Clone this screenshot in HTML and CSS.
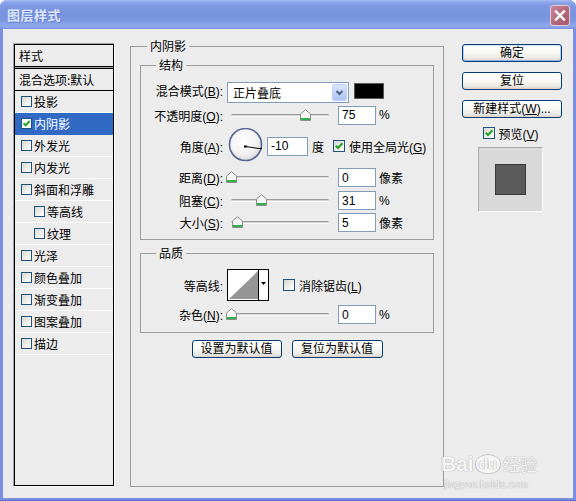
FILE: index.html
```html
<!DOCTYPE html>
<html lang="zh-CN">
<head>
<meta charset="utf-8">
<title>图层样式</title>
<link rel="stylesheet" href="styles.css">
</head>
<body>
<div class="window">
  <div class="titlebar">
    <span class="title">图层样式</span>
    <span class="close"><svg width="18" height="19" viewBox="0 0 18 19"><path d="M5 5.5 L13 13.5 M13 5.5 L5 13.5" stroke="#fff" stroke-width="2.4" stroke-linecap="square"/></svg></span>
  </div>
  <div class="client">
    <div class="stylelist">
      <div class="sl-inner">
        <div class="sl-head">样式</div>
        <div class="sl-sep"></div>
        <div class="sl-blend">混合选项:默认</div>
        <div class="sl-row"><span class="cb"></span>投影</div>
        <div class="sl-row sel"><span class="cb"><svg width="9" height="9" viewBox="0 0 9 9"><path d="M1.5 4.2 L3.6 6.4 L7.6 2" stroke="#21A121" stroke-width="1.9" fill="none"/></svg></span>内阴影</div>
        <div class="sl-row"><span class="cb"></span>外发光</div>
        <div class="sl-row"><span class="cb"></span>内发光</div>
        <div class="sl-row"><span class="cb"></span>斜面和浮雕</div>
        <div class="sl-row sub"><span class="cb"></span>等高线</div>
        <div class="sl-row sub"><span class="cb"></span>纹理</div>
        <div class="sl-row"><span class="cb"></span>光泽</div>
        <div class="sl-row"><span class="cb"></span>颜色叠加</div>
        <div class="sl-row"><span class="cb"></span>渐变叠加</div>
        <div class="sl-row"><span class="cb"></span>图案叠加</div>
        <div class="sl-row"><span class="cb"></span>描边</div>
      </div>
    </div>

    <fieldset class="grp main">
      <legend>内阴影</legend>
      <div class="main-body">
        <fieldset class="grp inner struct">
          <legend>结构</legend>
          <div class="row r1">
            <span class="lbl">混合模式(<u>B</u>):</span>
            <div class="select">
              <span class="sel-text">正片叠底</span>
              <span class="sel-btn"><svg width="13" height="15" viewBox="0 0 13 15"><path d="M3.5 6 L6.5 9 L9.5 6" stroke="#4D6185" stroke-width="2" fill="none"/></svg></span>
            </div>
            <span class="swatch"></span>
          </div>
          <div class="row r2">
            <span class="lbl">不透明度(<u>O</u>):</span>
            <div class="slider"><span class="track"></span><span class="thumb" style="left:75%"><svg width="11" height="12" viewBox="0 0 11 12"><path d="M0.5 11.5V5L5.5 0.7L10.5 5V11.5Z" fill="#f6f6f6" stroke="#8c8c8c"/><rect x="1" y="9" width="9" height="2" fill="#2eb04a"/></svg></span></div>
            <input class="num" value="75">
            <span class="unit">%</span>
          </div>
          <div class="row r3">
            <span class="lbl">角度(<u>A</u>):</span>
            <svg class="dial" width="36" height="34" viewBox="0 0 36 34">
              <defs><radialGradient id="dg" cx="42%" cy="38%" r="70%"><stop offset="0" stop-color="#ffffff"/><stop offset="0.6" stop-color="#f2f2f2"/><stop offset="1" stop-color="#d4d4d4"/></radialGradient></defs>
              <circle cx="17.5" cy="16.5" r="16" fill="url(#dg)" stroke="#56658f" stroke-width="1.6"/>
              <path d="M17.5 18.5 L31 20.5 L34 20.5" stroke="#000" stroke-width="1" fill="none"/>
              <rect x="16" y="17.5" width="3" height="2" fill="#000"/>
            </svg>
            <input class="num ang" value="-10">
            <span class="unit deg">度</span>
            <span class="cb lg"><svg width="10" height="10" viewBox="0 0 10 10"><path d="M1.8 4.8 L4 7 L8.4 2.2" stroke="#21A121" stroke-width="2" fill="none"/></svg></span>
            <span class="cbtext">使用全局光(<u>G</u>)</span>
          </div>
          <div class="row r4">
            <span class="lbl">距离(<u>D</u>):</span>
            <div class="slider"><span class="track"></span><span class="thumb" style="left:0%"><svg width="11" height="12" viewBox="0 0 11 12"><path d="M0.5 11.5V5L5.5 0.7L10.5 5V11.5Z" fill="#f6f6f6" stroke="#8c8c8c"/><rect x="1" y="9" width="9" height="2" fill="#2eb04a"/></svg></span></div>
            <input class="num" value="0">
            <span class="unit">像素</span>
          </div>
          <div class="row r5">
            <span class="lbl">阻塞(<u>C</u>):</span>
            <div class="slider"><span class="track"></span><span class="thumb" style="left:31%"><svg width="11" height="12" viewBox="0 0 11 12"><path d="M0.5 11.5V5L5.5 0.7L10.5 5V11.5Z" fill="#f6f6f6" stroke="#8c8c8c"/><rect x="1" y="9" width="9" height="2" fill="#2eb04a"/></svg></span></div>
            <input class="num" value="31">
            <span class="unit">%</span>
          </div>
          <div class="row r6">
            <span class="lbl">大小(<u>S</u>):</span>
            <div class="slider"><span class="track"></span><span class="thumb" style="left:6%"><svg width="11" height="12" viewBox="0 0 11 12"><path d="M0.5 11.5V5L5.5 0.7L10.5 5V11.5Z" fill="#f6f6f6" stroke="#8c8c8c"/><rect x="1" y="9" width="9" height="2" fill="#2eb04a"/></svg></span></div>
            <input class="num" value="5">
            <span class="unit">像素</span>
          </div>
        </fieldset>

        <fieldset class="grp inner quality">
          <legend>品质</legend>
          <div class="row q1">
            <span class="lbl">等高线:</span>
            <svg class="contour" width="42" height="32" viewBox="0 0 42 32">
              <rect x="0.5" y="0.5" width="41" height="31" fill="#fff" stroke="#000"/>
              <polygon points="2,30 31,2 31,30" fill="#959595"/>
              <line x1="31.5" y1="1" x2="31.5" y2="31" stroke="#000"/>
              <polygon points="34,13 39,13 36.5,16" fill="#000"/>
            </svg>
            <span class="cb lg aa"></span>
            <span class="cbtext">消除锯齿(<u>L</u>)</span>
          </div>
          <div class="row q2">
            <span class="lbl">杂色(<u>N</u>):</span>
            <div class="slider"><span class="track"></span><span class="thumb" style="left:0%"><svg width="11" height="12" viewBox="0 0 11 12"><path d="M0.5 11.5V5L5.5 0.7L10.5 5V11.5Z" fill="#f6f6f6" stroke="#8c8c8c"/><rect x="1" y="9" width="9" height="2" fill="#2eb04a"/></svg></span></div>
            <input class="num" value="0">
            <span class="unit">%</span>
          </div>
        </fieldset>

        <div class="defaults">
          <button class="btn w90">设置为默认值</button>
          <button class="btn w91">复位为默认值</button>
        </div>
      </div>
    </fieldset>

    <div class="side">
      <button class="btn side-btn default">确定</button>
      <button class="btn side-btn">复位</button>
      <button class="btn side-btn">新建样式(<u>W</u>)...</button>
      <div class="preview-toggle">
        <span class="cb lg"><svg width="10" height="10" viewBox="0 0 10 10"><path d="M1.8 4.8 L4 7 L8.4 2.2" stroke="#21A121" stroke-width="2" fill="none"/></svg></span>
        <span class="cbtext">预览(<u>V</u>)</span>
      </div>
      <div class="preview"><span class="preview-sq"></span></div>
    </div>
  </div>

  <div class="watermark">
    <div class="wm-top"><span class="wm-bai">Bai</span><span class="wm-paw">du</span><span class="wm-jy">经验</span></div>
    <div class="wm-url">jingyan.baidu.com</div>
  </div>
</div>
</body>
</html>
```

FILE: styles.css
```css
html, body {
  margin: 0;
  padding: 0;
  background: #ffffff;
}

body {
  font-family: "Liberation Sans", "Noto Sans CJK SC", sans-serif;
  font-size: 12px;
  color: #000;
}

.window {
  position: relative;
  width: 576px;
  height: 501px;
  box-sizing: border-box;
  display: flex;
  flex-direction: column;
  background: #7b8fe2;
  border-radius: 7px 7px 0 0;
  overflow: hidden;
  box-shadow: inset 0 -1px 0 #5a6cc8;
}

/* ---------- title bar ---------- */
.titlebar {
  height: 29px;
  flex: none;
  display: flex;
  align-items: center;
  justify-content: space-between;
  padding: 0 6px 0 7px;
  background: linear-gradient(to bottom,
    #a9bdf3 0px, #8ea6eb 2px, #7d97e2 6px, #7893df 15px,
    #7d98e2 21px, #8da9ee 25px, #88a3ea 27px, #7b90e0 29px);
}

.title {
  font-family: "Noto Sans CJK SC", sans-serif;
  font-weight: bold;
  font-size: 13px;
  color: #dce6f8;
  letter-spacing: 0.5px;
  text-shadow: 1px 1px 0 rgba(60, 80, 170, 0.35);
}

.close {
  width: 18px;
  height: 19px;
  margin-top: 2px;
  border: 1px solid #e6cad3;
  border-radius: 3px;
  background: linear-gradient(135deg, #c6899a, #b06578 60%, #a45a6f);
  display: flex;
}

/* ---------- client area ---------- */
.client {
  flex: 1;
  margin: 0 3px 3px;
  background: #ececec;
  display: flex;
  padding: 10px 11px 11px 10px;
}

/* ---------- left style list ---------- */
.stylelist {
  width: 102px;
  flex: none;
  box-sizing: border-box;
  margin-top: 4px;
  border: 1px solid;
  border-color: #a0a0a0 #ffffff #ffffff #a0a0a0;
}

.sl-inner {
  height: 100%;
  box-sizing: border-box;
  border: 1px solid #000;
  font-family: "Noto Sans CJK SC", sans-serif;
}

.sl-head {
  height: 21px;
  line-height: 21px;
  padding-left: 4px;
  border-bottom: 1px solid #000;
}

.sl-sep {
  height: 1px;
  background: #a4a4a4;
}

.sl-blend {
  height: 21px;
  line-height: 21px;
  padding-left: 4px;
  border-top: 1px solid #000;
  border-bottom: 1px solid #000;
}

.sl-row {
  height: 21px;
  display: flex;
  align-items: center;
  padding-left: 6px;
  border-bottom: 1px solid #ffffff;
}

.sl-row .cb {
  width: 11px;
  height: 11px;
  margin-right: 2px;
}

.sl-row.sub {
  padding-left: 19px;
}

.sl-row.sel {
  background: #316ac5;
  color: #fff;
  border-bottom-color: #316ac5;
}

.sl-row.sel .cb {
  background: #fff;
}

/* ---------- checkboxes ---------- */
.cb {
  width: 12px;
  height: 12px;
  box-sizing: border-box;
  flex: none;
  border: 1px solid #1c5180;
  background: linear-gradient(135deg, #d8d8d2 0%, #f0f0ec 60%, #ffffff 100%);
  display: flex;
  align-items: center;
  justify-content: center;
}

.cb svg {
  display: block;
}

.cbtext {
  font-family: "Liberation Sans", "Noto Sans CJK SC", sans-serif;
  margin-left: 4px;
  white-space: nowrap;
}

/* ---------- fieldsets ---------- */
.grp {
  margin: 0;
  padding: 0;
  min-width: 0;
  border: 1px solid #9c9c9c;
}

.grp > legend {
  padding: 0 3px;
  height: 14px;
  line-height: 14px;
  font-family: "Noto Sans CJK SC", sans-serif;
  font-size: 12px;
}

.grp.main {
  width: 314px;
  flex: none;
  box-sizing: border-box;
  margin-left: 15px;
}

.grp.main > legend {
  margin-left: 16px;
}

.main-body {
  padding: 5px 9px 0;
}

.grp.inner > legend {
  margin-left: 15px;
}

.grp.struct {
  padding-bottom: 7px;
}

.grp.quality {
  margin-top: 6px;
  padding-bottom: 8px;
}

/* ---------- rows ---------- */
.row {
  display: flex;
  align-items: center;
}

.lbl {
  width: 82px;
  flex: none;
  text-align: right;
  white-space: nowrap;
}

.r1 { margin-top: 10px; height: 21px; align-items: flex-start; }
.r2 { margin-top: 2px; height: 20px; }
.r3 { margin-top: 6px; height: 30px; }
.r4 { margin-top: 7px; height: 19px; }
.r5 { margin-top: 4px; height: 19px; }
.r6 { margin-top: 3px; height: 19px; }
.q1 { margin-top: 9px; height: 32px; }
.q2 { margin-top: 4px; height: 19px; }

.r1 .lbl { line-height: 21px; }

/* dropdown */
.select {
  width: 122px;
  height: 21px;
  margin-left: 4px;
  box-sizing: border-box;
  border: 1px solid #7f9db9;
  background: #fff;
  display: flex;
  align-items: center;
  justify-content: space-between;
  padding-right: 1px;
}

.sel-text {
  padding-left: 5px;
  font-family: "Noto Sans CJK SC", sans-serif;
}

.sel-btn {
  width: 15px;
  height: 17px;
  box-sizing: border-box;
  border: 1px solid #bed0fa;
  border-radius: 2px;
  background: linear-gradient(to bottom, #dbe6fd, #c1d3fb 50%, #aec5f5);
  display: flex;
  align-items: center;
  justify-content: center;
}

.swatch {
  width: 30px;
  height: 16px;
  margin-left: 5px;
  margin-top: 1px;
  box-sizing: border-box;
  background: #000;
  border: 1px solid #5a5a5a;
}

/* slider */
.slider {
  position: relative;
  width: 98px;
  height: 19px;
  margin-left: 8px;
  flex: none;
}

.track {
  display: block;
  margin-top: 8px;
  height: 3px;
  border-radius: 2px;
  background: linear-gradient(to bottom, #9a9a9a 0, #9a9a9a 1px, #d6d6d6 1px, #d6d6d6 2px, #fafafa 2px);
}

.thumb {
  position: absolute;
  top: 3px;
  margin-left: -5px;
  width: 11px;
  height: 12px;
}

.thumb svg {
  display: block;
}

/* numeric inputs */
.num {
  width: 38px;
  height: 19px;
  margin: 0 0 0 9px;
  box-sizing: border-box;
  border: 1px solid #7f9db9;
  background: #fff;
  padding: 0 3px;
  font-family: "Liberation Sans", sans-serif;
  font-size: 12px;
  color: #000;
  outline: none;
}

.unit {
  margin-left: 3px;
  font-family: "Liberation Sans", "Noto Sans CJK SC", sans-serif;
}

/* angle */
.dial {
  flex: none;
  align-self: flex-start;
  margin-top: -3px;
  margin-left: 5px;
}

.num.ang {
  width: 41px;
  margin-left: 3px;
}

.unit.deg {
  margin-left: 4px;
  font-family: "Noto Sans CJK SC", sans-serif;
}

.r3 .cb {
  margin-left: 9px;
}

/* contour */
.contour {
  flex: none;
  margin-left: 4px;
  display: block;
}

.cb.aa {
  margin-left: 14px;
}

/* buttons */
.btn {
  height: 18px;
  box-sizing: border-box;
  padding: 0;
  border: 1px solid #003c74;
  border-radius: 3px;
  background: linear-gradient(to bottom, #ffffff 0%, #f8f8f5 45%, #ecebe6 80%, #d8d3c9 100%);
  font-family: "Liberation Sans", "Noto Sans CJK SC", sans-serif;
  font-size: 12px;
  line-height: 16px;
  color: #000;
  text-align: center;
}

.defaults {
  display: flex;
  justify-content: center;
  gap: 10px;
  margin-top: 7px;
}

.w90 { width: 90px; }
.w91 { width: 91px; }

/* right column */
.side {
  width: 100px;
  flex: none;
  margin-left: 18px;
  margin-top: 5px;
  display: flex;
  flex-direction: column;
  align-items: center;
}

.side-btn {
  width: 100px;
  margin-bottom: 10px;
}

.side-btn.default {
  box-shadow: inset 0 1px 0 #cfe0fc, inset 0 -1px 0 #8fb0ec, inset 1px 0 0 #b8cff7, inset -1px 0 0 #b8cff7;
}

.preview-toggle {
  display: flex;
  align-items: center;
  height: 12px;
  margin-top: -1px;
  padding-right: 2px;
}

.preview-toggle .cbtext {
  margin-left: 3px;
}

.preview {
  width: 65px;
  height: 65px;
  margin-top: 8px;
  margin-right: 3px;
  box-sizing: border-box;
  background: #d9d9d9;
  border: 1px solid;
  border-color: #a8a8a8 #ffffff #ffffff #a8a8a8;
  display: flex;
  align-items: center;
  justify-content: center;
}

.preview-sq {
  width: 31px;
  height: 31px;
  box-sizing: border-box;
  background: #5b5b5b;
  border: 1px solid #3a3a3a;
}

/* watermark overlay */
.watermark {
  position: absolute;
  left: 441px;
  top: 446px;
  width: 106px;
  color: #f7f7f7;
  text-shadow: 0 0 1px #a8a8a8, 0 0 1px #a8a8a8;
  opacity: 0.9;
  pointer-events: none;
}

.wm-top {
  display: flex;
  align-items: flex-end;
  height: 30px;
}

.wm-bai {
  font-family: "Liberation Sans", sans-serif;
  font-weight: bold;
  font-size: 21px;
  line-height: 24px;
}

.wm-paw {
  font-family: "Liberation Sans", sans-serif;
  font-weight: bold;
  font-size: 15px;
  line-height: 18px;
  margin: 0 2px 2px 1px;
  padding: 0 3px;
  border: 1px solid #c4c4c4;
  border-radius: 50% 50% 45% 45%;
  background: rgba(255, 255, 255, 0.55);
}

.wm-jy {
  font-family: "Noto Sans CJK SC", sans-serif;
  font-size: 17px;
  line-height: 24px;
}

.wm-url {
  font-family: "Liberation Sans", sans-serif;
  font-size: 10px;
  line-height: 14px;
  margin-top: 2px;
  padding-left: 3px;
  letter-spacing: 0.2px;
}
```
